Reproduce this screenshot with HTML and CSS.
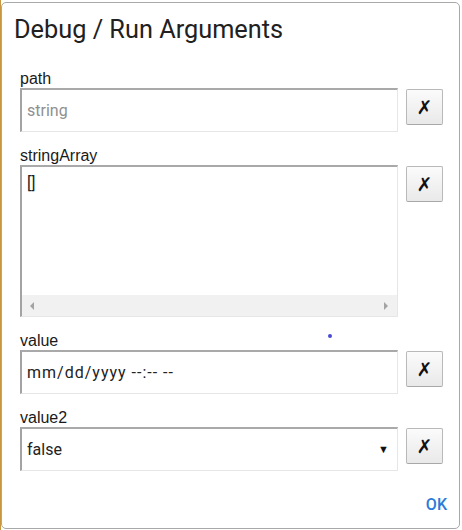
FILE: index.html
```html
<!DOCTYPE html>
<html>
<head>
<meta charset="utf-8">
<link rel="stylesheet" href="styles.css">
</head>
<body>
<div class="dialog">
  <div class="header"><h1 class="title">Debug / Run Arguments</h1></div>
  <div class="fields">
    <div class="field">
      <div class="label">path</div>
      <div class="input placeholder">string</div>
      <button class="clear">✗</button>
    </div>
    <div class="field">
      <div class="label">stringArray</div>
      <div class="input area">
        <div class="area-text">[]</div>
        <div class="hscroll">
          <span class="arrow-left"></span>
          <span class="arrow-right"></span>
        </div>
      </div>
      <button class="clear">✗</button>
    </div>
    <div class="field">
      <div class="label">value</div>
      <div class="input datetime">mm/dd/yyyy --:-- --</div>
      <button class="clear">✗</button>
    </div>
    <div class="field">
      <div class="label">value2</div>
      <div class="input select"><span>false</span><span class="caret">▼</span></div>
      <button class="clear">✗</button>
    </div>
  </div>
  <div class="footer"><span class="ok">OK</span></div>
  <span class="dot"></span>
</div>
</body>
</html>
```
FILE: styles.css
```css
html, body {
  margin: 0;
  padding: 0;
}
body {
  width: 462px;
  height: 530px;
  overflow: hidden;
  background: linear-gradient(to right, #c8963c 1px, #ffffff 1px);
}
.dialog {
  position: relative;
  margin: 2px 0 0 1px;
  width: 459px;
  height: 527px;
  box-sizing: border-box;
  border: 1px solid #a8a8a8;
  border-radius: 5px;
  background: #fff;
}
.header {
  padding: 13px 0 0 12px;
}
.title {
  margin: 0;
  font: 400 25.3px/28px Roboto, "Noto Sans", sans-serif;
  color: #212121;
}
.fields {
  padding: 26px 16px 0 18px;
  display: flex;
  flex-direction: column;
  gap: 15px;
}
.field {
  display: grid;
  grid-template-columns: 1fr 37px;
  column-gap: 8px;
}
.label {
  grid-column: 1 / -1;
  font: 16px/18px "Liberation Sans", Arial, sans-serif;
  color: #1a1a1a;
}
.input {
  height: 44px;
  box-sizing: border-box;
  border-style: solid;
  border-width: 2px 1px 1px 2px;
  border-color: #a9a9a9 #e6e6e6 #e6e6e6 #a3a3a3;
  padding: 0 5px;
  display: flex;
  align-items: center;
  font: 16px Roboto, "Noto Sans", sans-serif;
  color: #222;
}
.placeholder {
  color: #8f8f8f;
}
.datetime {
  letter-spacing: 1px;
}
.area {
  height: 152px;
  padding: 0;
  flex-direction: column;
  align-items: stretch;
}
.area-text {
  flex: 1;
  padding: 7px 5px 0;
  line-height: 19px;
}
.hscroll {
  height: 21px;
  background: #f1f1f1;
  display: flex;
  justify-content: space-between;
  align-items: center;
  padding: 0 9px 0 8px;
}
.arrow-left {
  width: 0;
  height: 0;
  border-top: 4px solid transparent;
  border-bottom: 4px solid transparent;
  border-right: 4px solid #a3a3a3;
}
.arrow-right {
  width: 0;
  height: 0;
  border-top: 4px solid transparent;
  border-bottom: 4px solid transparent;
  border-left: 4px solid #a3a3a3;
}
.select {
  justify-content: space-between;
  padding-right: 8px;
}
.caret {
  font-size: 11px;
  color: #111;
}
.clear {
  align-self: start;
  margin-top: 1px;
  height: 36px;
  width: 37px;
  box-sizing: border-box;
  border: 1px solid #b9b9b9;
  border-bottom-color: #a8a8a8;
  border-radius: 2px;
  background: linear-gradient(#fbfbfb, #e9e9e9);
  font: 400 19px/1 "DejaVu Sans", sans-serif;
  color: #111;
  padding: 0;
  display: flex;
  align-items: center;
  justify-content: center;
}
.footer {
  display: flex;
  justify-content: flex-end;
  padding: 24px 12px 0 0;
}
.ok {
  font: 500 16px/20px Roboto, sans-serif;
  color: #2b7bd8;
}
.dot {
  position: absolute;
  left: 326px;
  top: 331px;
  width: 4px;
  height: 4px;
  border-radius: 50%;
  background: #4a4ad6;
}
```
